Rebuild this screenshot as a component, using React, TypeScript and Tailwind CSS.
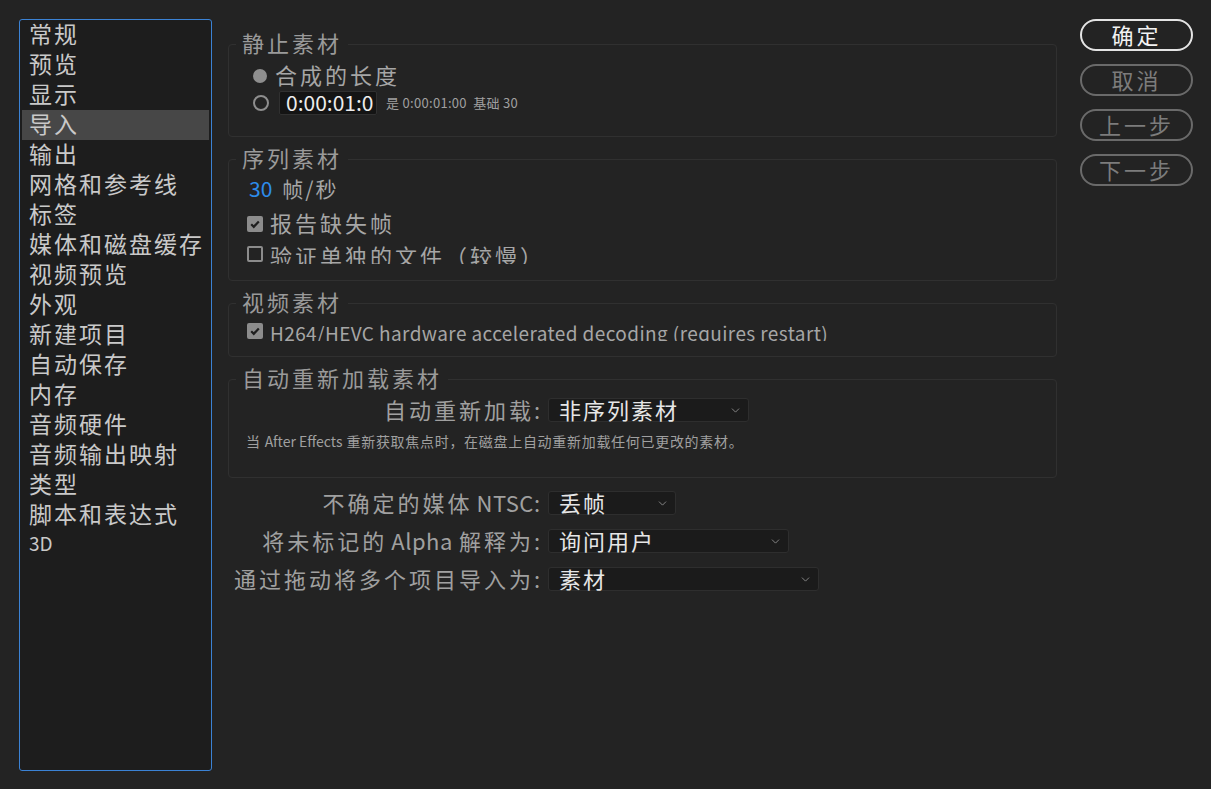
import { ChevronDown } from "lucide-react";

const font = { fontFamily: '"Noto Sans CJK SC", "Noto Sans", sans-serif' };

const navItems = [
  "常规",
  "预览",
  "显示",
  "导入",
  "输出",
  "网格和参考线",
  "标签",
  "媒体和磁盘缓存",
  "视频预览",
  "外观",
  "新建项目",
  "自动保存",
  "内存",
  "音频硬件",
  "音频输出映射",
  "类型",
  "脚本和表达式",
];

const Group = ({ title, className, children }: { title: string; className: string; children: React.ReactNode }) => (
  <fieldset className={`border border-[#303030] rounded-[4px] pl-[7px] pr-2 ${className}`}>
    <legend className="px-[6px] text-[22px] leading-[24px] tracking-[3px] text-[#9a9a9a]">
      <span className="relative -top-[2px]">{title}</span>
    </legend>
    {children}
  </fieldset>
);

const Check = ({ on }: { on: boolean }) =>
  on ? (
    <span className="w-[16px] h-[16px] rounded-[2px] bg-[#8c8c8c] flex items-center justify-center shrink-0">
      <svg width="12" height="12" viewBox="0 0 12 12">
        <path d="M2.2 6.2 L4.8 8.8 L9.8 3.4" fill="none" stroke="#1e1e1e" strokeWidth="2.2" />
      </svg>
    </span>
  ) : (
    <span className="block w-[16px] h-[16px] rounded-[2px] border-2 border-[#8c8c8c] shrink-0" />
  );

const Select = ({ value, w }: { value: string; w: string }) => (
  <div
    className={`${w} h-[24px] bg-[#1b1b1b] border border-[#2e2e2e] rounded-[3px] flex items-center justify-between pl-[10px] pr-[6px]`}
  >
    <span className="text-[22px] leading-none tracking-[2px] text-[#e6e6e6] pb-[2px]">{value}</span>
    <ChevronDown size={13} strokeWidth={1.5} className="text-[#9a9a9a]" />
  </div>
);

const Btn = ({ label, primary }: { label: string; primary?: boolean }) => (
  <button
    className={`w-[113px] h-[32px] rounded-full border-2 flex items-center justify-center text-[22px] tracking-[3px] leading-none pb-[2px] ${
      primary ? "border-[#e4e4e4] text-[#f2f2f2]" : "border-[#6a6a6a] text-[#7c7c7c]"
    }`}
  >
    {label}
  </button>
);

const rows = [
  { a: "不确定的媒体", b: "NTSC", c: ":", gap: "mr-0", v: "丢帧", w: "w-[128px]" },
  { a: "将未标记的", b: "Alpha", c: "解释为:", gap: "mr-[6px]", v: "询问用户", w: "w-[241px]" },
  { a: "通过拖动将多个项目导入为:", b: "", c: "", gap: "", v: "素材", w: "w-[271px]" },
];

export default function App() {
  return (
    <div style={font} className="w-[1211px] h-[789px] bg-[#232323] flex pl-[19px] pt-[19px] overflow-hidden">
      {/* sidebar */}
      <div className="w-[193px] h-[752px] shrink-0 bg-[#1d1d1d] border border-[#3b82d4] rounded-[3px] px-[2px]">
        {navItems.map((n, i) => (
          <div
            key={n}
            className={`h-[30px] flex items-center pl-[7px] pb-[3px] text-[23px] tracking-[2px] text-[#c9c9c9] ${
              i === 3 ? "bg-[#474747]" : ""
            }`}
          >
            {n}
          </div>
        ))}
        <div className="h-[30px] flex items-center pl-[7px] pb-[3px] text-[19px] text-[#c9c9c9]">3D</div>
      </div>

      {/* main */}
      <div className="w-[829px] ml-[16px] pt-[13px] shrink-0 flex flex-col gap-[10px]">
        <Group title="静止素材" className="pt-[6px] pb-[20px]">
          <div className="h-[27px] flex items-center pl-[17px]">
            <span className="block w-[14px] h-[14px] shrink-0 rounded-full bg-[#8e8e8e]" />
            <span className="ml-[8px] pb-[3px] text-[22px] tracking-[3px] text-[#a6a6a6]">合成的长度</span>
          </div>
          <div className="h-[27px] flex items-center pl-[17px]">
            <span className="block w-[16px] h-[16px] shrink-0 rounded-full border-2 border-[#8e8e8e]" />
            <div className="ml-[10px] w-[98px] h-[24px] shrink-0 bg-[#141414] border border-[#303030] rounded-[2px] overflow-hidden flex items-center pl-[6px]">
              <span className="text-[21px] leading-none whitespace-nowrap text-[#ededed] pb-[1px]">0:00:01:0</span>
            </div>
            <span className="ml-[9px] text-[13px] tracking-[0.3px] text-[#a0a0a0] whitespace-pre">是 0:00:01:00  基础 30</span>
          </div>
        </Group>

        <Group title="序列素材" className="pt-[6px] pb-[11px]">
          <div className="h-[26px] flex items-center pl-[13px] pb-[2px] text-[21px]">
            <span className="text-[#2d8ceb]">30</span>
            <span className="ml-[10px] tracking-[2px] text-[#a6a6a6]">帧/秒</span>
          </div>
          <div className="h-[30px] mt-[6px] flex items-center pl-[11px]">
            <Check on />
            <span className="ml-[7px] pb-[3px] text-[22px] tracking-[3px] text-[#a6a6a6]">报告缺失帧</span>
          </div>
          <div className="h-[30px] flex items-center pl-[11px]">
            <Check on={false} />
            <span className="ml-[7px] h-[22px] mb-[2px] overflow-hidden text-[22px] leading-[26px] tracking-[3px] text-[#a6a6a6]">
              验证单独的文件（较慢）
            </span>
          </div>
        </Group>

        <Group title="视频素材" className="pt-[3px] pb-[12px]">
          <div className="h-[26px] flex items-center pl-[11px]">
            <Check on />
            <span className="ml-[7px] h-[20px] overflow-hidden text-[19px] leading-[24px] tracking-[0.4px] text-[#a6a6a6] whitespace-nowrap">
              H264/HEVC hardware accelerated decoding (requires restart)
            </span>
          </div>
        </Group>

        <Group title="自动重新加载素材" className="pt-[6px] pb-[25px]">
          <div className="h-[26px] flex items-center">
            <span className="w-[307px] text-right pb-[2px] text-[22px] tracking-[3px] text-[#a0a0a0]">自动重新加载:</span>
            <div className="ml-[5px]">
              <Select value="非序列素材" w="w-[201px]" />
            </div>
          </div>
          <div className="h-[22px] mt-[7px] flex items-center pl-[10px] text-[14px] tracking-[0.7px] text-[#a0a0a0] whitespace-nowrap">
            当 <span className="tracking-normal mx-[4px]">After Effects</span>重新获取焦点时，在磁盘上自动重新加载任何已更改的素材。
          </div>
        </Group>

        <div className="mt-[2px] flex flex-col gap-[12px]">
          {rows.map((r) => (
            <div key={r.a} className="h-[26px] flex items-center">
              <span className="w-[315px] pb-[2px] text-right text-[22px] tracking-[3px] text-[#a0a0a0] whitespace-nowrap">
                {r.a}
                {r.b && <span className={`tracking-[0.5px] ml-[4px] ${r.gap}`}>{r.b}</span>}
                {r.c}
              </span>
              <div className="ml-[5px]">
                <Select value={r.v} w={r.w} />
              </div>
            </div>
          ))}
        </div>
      </div>

      {/* buttons */}
      <div className="ml-[23px] flex flex-col gap-[13px]">
        <Btn label="确定" primary />
        <Btn label="取消" />
        <Btn label="上一步" />
        <Btn label="下一步" />
      </div>
    </div>
  );
}
